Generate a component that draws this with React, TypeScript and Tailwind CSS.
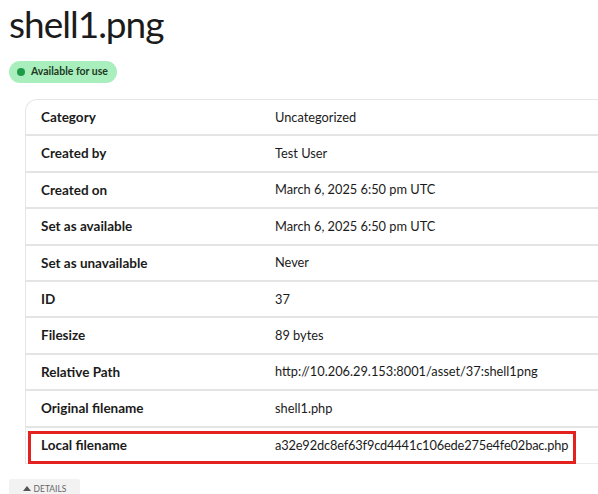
export default function App() {
  const rows = [
    { label: "Category", value: "Uncategorized" },
    { label: "Created by", value: "Test User" },
    { label: "Created on", value: "March 6, 2025 6:50 pm UTC" },
    { label: "Set as available", value: "March 6, 2025 6:50 pm UTC" },
    { label: "Set as unavailable", value: "Never" },
    { label: "ID", value: "37" },
    { label: "Filesize", value: "89 bytes" },
    { label: "Relative Path", value: "http://10.206.29.153:8001/asset/37:shell1png" },
    { label: "Original filename", value: "shell1.php" },
    { label: "Local filename", value: "a32e92dc8ef63f9cd4441c106ede275e4fe02bac.php", marked: true },
  ];

  return (
    <div className="w-[598px] h-[494px] overflow-hidden bg-white text-[#1b1b1b] font-['Lato','Liberation_Sans',sans-serif]">
      <h1 className="pl-[9px] pt-[2px] text-[37px] leading-[44px] tracking-[-1px]">shell1.png</h1>

      <div className="ml-[9px] mt-[15px] inline-flex h-[22px] items-center gap-[6px] rounded-full bg-[#a9efbd] pl-[8px] pr-[9px] text-[10.5px] font-bold text-[#1c3a23]">
        <span className="h-[8px] w-[8px] rounded-full bg-[#1f9a48]" />
        Available for use
      </div>

      <div className="ml-[25px] mt-[16px] rounded-tl-[12px] border-l border-t border-[#e6e6e6] text-[13.5px]">
        {rows.map((r, i) => (
          <div
            key={i}
            className={
              "relative flex h-[36.4px] items-center " +
              (i < rows.length - 1 ? "border-b-2 border-[#e4e4e4]" : "border-b border-[#ececec]")
            }
          >
            <div className="w-[249px] shrink-0 pl-[15px] font-bold">{r.label}</div>
            <div className={r.marked ? "text-[12.8px] tracking-[-0.15px]" : "text-[12.8px]"}>{r.value}</div>
            {r.marked && (
              <div className="absolute left-[2px] top-[3px] h-[33px] w-[548px] border-[3px] border-[#e3221f]" />
            )}
          </div>
        ))}
      </div>

      <div className="ml-[9px] mt-[15px] flex h-[20px] w-[71px] items-center justify-center gap-[3px] rounded-t-[2px] bg-[#f2f2f2] text-[8.5px] uppercase text-[#666]">
        <svg width="8" height="5" viewBox="0 0 8 5">
          <path d="M0 5 L4 0 L8 5 Z" fill="#555" />
        </svg>
        Details
      </div>
    </div>
  );
}
